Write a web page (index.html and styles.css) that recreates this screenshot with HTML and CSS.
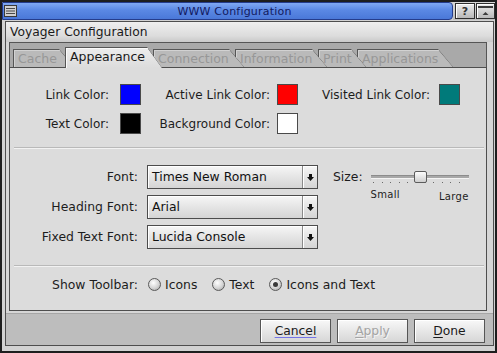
FILE: index.html
```html
<!DOCTYPE html>
<html lang="en">
<head>
  <meta charset="UTF-8">
  <title>WWW Configuration</title>
  <link rel="stylesheet" href="styles.css">
</head>
<body>
  <div class="window">
    <div class="titlebar">
      <div class="title-main">
        <span class="menu-icon">
          <svg width="13" height="12" viewBox="0 0 13 12">
            <rect x="0.5" y="0.5" width="12" height="11" fill="#d0d0d0" stroke="#3a3a3a"/>
            <path d="M2 3.5h9M2 6h9M2 8.5h9" stroke="#4a4a4a" stroke-width="1"/>
          </svg>
        </span>
        <span class="title">WWW Configuration</span>
      </div>
      <div class="title-buttons">
        <span class="tbtn help">?</span>
        <span class="tbtn shade">
          <svg width="17" height="14" viewBox="0 0 17 14">
            <rect x="1" y="2" width="15" height="2" fill="#3c3c3c"/>
            <polygon points="5.5,11 11.5,11 8.5,8" fill="#3c3c3c"/>
          </svg>
        </span>
      </div>
    </div>

    <div class="frame">
      <div class="header">Voyager Configuration</div>

      <div class="notebook">
        <div class="tabs">
          <div class="tab"><div class="tab-face">Cache</div></div>
          <div class="tab active"><div class="tab-face">Appearance</div></div>
          <div class="tab"><div class="tab-face">Connection</div></div>
          <div class="tab"><div class="tab-face">Information</div></div>
          <div class="tab"><div class="tab-face">Print</div></div>
          <div class="tab"><div class="tab-face">Applications</div></div>
        </div>

        <div class="panel">
          <div class="colors">
            <span class="label pad-a">Link Color:</span>
            <span class="swatch blue"></span>
            <span class="label pad-b">Active Link Color:</span>
            <span class="swatch red"></span>
            <span class="label pad-c">Visited Link Color:</span>
            <span class="swatch teal"></span>

            <span class="label pad-a">Text Color:</span>
            <span class="swatch black"></span>
            <span class="label pad-b">Background Color:</span>
            <span class="swatch white"></span>
          </div>

          <div class="sep"></div>

          <div class="fonts">
            <span class="label">Font:</span>
            <div class="select">
              <span class="select-text">Times New Roman</span>
              <span class="select-arrow"><svg width="7" height="7" viewBox="0 0 7 7"><rect x="2" y="0" width="3" height="3" fill="#111"/><polygon points="0,3 7,3 3.5,7" fill="#111"/></svg></span>
            </div>
            <div class="size-box">
              <span class="size-label">Size:</span>
              <div class="slider">
                <div class="slider-row">
                  <div class="track"></div>
                  <div class="thumb"></div>
                </div>
                <div class="ticks"></div>
                <div class="slider-labels">
                  <span>Small</span>
                  <span class="large">Large</span>
                </div>
              </div>
            </div>

            <span class="label">Heading Font:</span>
            <div class="select">
              <span class="select-text">Arial</span>
              <span class="select-arrow"><svg width="7" height="7" viewBox="0 0 7 7"><rect x="2" y="0" width="3" height="3" fill="#111"/><polygon points="0,3 7,3 3.5,7" fill="#111"/></svg></span>
            </div>

            <span class="label">Fixed Text Font:</span>
            <div class="select">
              <span class="select-text">Lucida Console</span>
              <span class="select-arrow"><svg width="7" height="7" viewBox="0 0 7 7"><rect x="2" y="0" width="3" height="3" fill="#111"/><polygon points="0,3 7,3 3.5,7" fill="#111"/></svg></span>
            </div>
          </div>

          <div class="sep sep-low"></div>

          <div class="toolbar-row">
            <span class="label">Show Toolbar:</span>
            <div class="options">
              <span class="option"><span class="radio"></span>Icons</span>
              <span class="option"><span class="radio"></span>Text</span>
              <span class="option"><span class="radio checked"></span>Icons and Text</span>
            </div>
          </div>
        </div>
      </div>

      <div class="actions">
        <button class="btn"><span class="focus">Cancel</span></button>
        <button class="btn disabled"><u>A</u>pply</button>
        <button class="btn"><u>D</u>one</button>
      </div>
    </div>
  </div>
</body>
</html>
```

FILE: styles.css
```css
/* Voyager config dialog */
body {
  margin: 0;
  background: #000;
  font-family: "DejaVu Sans", sans-serif;
  font-size: 12px;
  color: #1c1c1c;
}

.window {
  width: 497px;
  height: 353px;
  box-sizing: border-box;
  border: 2px solid #1e1e1e;
  background: #d2d2d2;
  display: flex;
  flex-direction: column;
}

/* title bar */
.titlebar {
  height: 18px;
  display: flex;
  flex-shrink: 0;
}

.title-main {
  flex: 1;
  display: flex;
  align-items: center;
  box-sizing: border-box;
  border: 1px solid #243c8c;
  border-radius: 0 4px 4px 0;
  background: linear-gradient(#80a8f2, #5a88e4 45%, #4a78d8);
}

.menu-icon {
  display: flex;
  margin-left: 1px;
}

.title {
  flex: 1;
  text-align: center;
  font-size: 11px;
  letter-spacing: 0.2px;
  color: #121a60;
}

.title-buttons {
  width: 42px;
  box-sizing: border-box;
  padding-left: 2px;
  display: flex;
  gap: 1px;
  align-items: center;
  background: linear-gradient(#d8d8d8, #bdbdbd);
}

.tbtn {
  width: 20px;
  height: 16px;
  box-sizing: border-box;
  border: 1px solid #2e2e2e;
  background: linear-gradient(#ededed, #b8b8b8);
  box-shadow: inset 1px 1px 0 #fff;
  display: flex;
  align-items: center;
  justify-content: center;
}

.tbtn.help {
  font-size: 11px;
  font-weight: bold;
  color: #333;
}

.tbtn.shade {
  width: 19px;
}

/* frame */
.frame {
  flex: 1;
  margin: 1px 1px 5px 3px;
  border: 1px solid #4e4e4e;
  background: #d6d6d6;
  display: flex;
  flex-direction: column;
}

.header {
  height: 20px;
  line-height: 20px;
  padding-left: 4px;
  font-size: 12.3px;
  color: #1a1a1a;
  background: linear-gradient(#efefef, #dcdcdc 70%, #c9c9c9);
}

.notebook {
  margin: 0 6px 0 3px;
}

/* tabs */
.tabs {
  height: 25px;
  box-sizing: border-box;
  border: 1px solid #555;
  border-bottom: 0;
  background: #a9a9a9;
  display: flex;
  align-items: flex-end;
  padding-left: 3px;
  font-size: 12.5px;
}

.tab {
  position: relative;
  flex-shrink: 0;
  height: 18px;
  box-sizing: border-box;
  margin-left: -9px;
  padding: 1px 0 0 1px;
  background: #555;
  clip-path: polygon(0 0, calc(100% - 15px) 0, 100% 100%, 0 100%);
}

.tab-face {
  height: 100%;
  padding-left: 4px;
  line-height: 17px;
  color: #979797;
  background: #bababa;
  box-shadow: inset 1px 1px 0 #d2d2d2;
  clip-path: polygon(0 0, calc(100% - 14.5px) 0, 100% 100%, 0 100%);
}

.tab.active {
  height: 21px;
  margin-bottom: -1px;
}

.tab.active .tab-face {
  line-height: 18px;
  color: #1a1a1a;
  background: linear-gradient(#ededed, #dcdcdc);
  box-shadow: inset 1px 1px 0 #fafafa;
}

.tab:nth-child(1) { margin-left: 0; width: 61px; z-index: 6; }
.tab:nth-child(2) { width: 97px; z-index: 10; }
.tab:nth-child(3) { width: 91px; z-index: 5; }
.tab:nth-child(4) { width: 92px; z-index: 4; }
.tab:nth-child(5) { width: 48px; z-index: 3; }
.tab:nth-child(6) { width: 96px; z-index: 2; }

/* panel */
.panel {
  height: 244px;
  box-sizing: border-box;
  border: 1px solid #4e4e4e;
  background: #dcdcdc;
  padding-top: 16px;
}

.label {
  text-align: right;
}

.colors {
  display: grid;
  grid-template-columns: 110px 21px 136px 21px 141px 21px;
  grid-auto-rows: 21px;
  row-gap: 8px;
  align-items: center;
}

.pad-a { padding-right: 11px; }
.pad-b { padding-right: 7px; }
.pad-c { padding-right: 9px; }

.swatch {
  width: 21px;
  height: 21px;
  box-sizing: border-box;
  border: 1px solid #4a4a4a;
}

.blue { background: #0000ff; }
.red { background: #ff0000; }
.teal { background: #007a7a; }
.black { background: #000; }
.white { background: #fff; }

.sep {
  margin: 13px 2px 0 4px;
  border-top: 1px solid #b9b9b9;
  border-bottom: 1px solid #f2f2f2;
}

.sep-low {
  margin-top: 16px;
}

/* fonts */
.fonts {
  display: grid;
  grid-template-columns: 128px 171px 1fr;
  grid-auto-rows: 24px;
  column-gap: 9px;
  row-gap: 6px;
  margin-top: 16px;
  font-size: 12.4px;
}

.fonts .label {
  line-height: 24px;
}

.select {
  display: flex;
  box-sizing: border-box;
  border: 1px solid #4c4c4c;
  background: linear-gradient(#f6f6f6, #d4d4d4);
  box-shadow: inset 1px 1px 0 #fff;
}

.select-text {
  flex: 1;
  padding-left: 4px;
  line-height: 22px;
  color: #111;
}

.select-arrow {
  width: 15px;
  box-sizing: border-box;
  border-left: 1px solid #8a8a8a;
  box-shadow: inset 1px 0 0 #fff;
  display: flex;
  align-items: center;
  justify-content: center;
}

.size-box {
  grid-column: 3;
  grid-row: 1 / span 3;
  display: flex;
  align-items: flex-start;
  margin-left: 6px;
}

.size-label {
  line-height: 24px;
}

.slider {
  width: 98px;
  margin-left: 8px;
  padding-top: 6px;
}

.slider-row {
  position: relative;
  height: 12px;
  display: flex;
  align-items: center;
}

.track {
  width: 100%;
  height: 4px;
  box-sizing: border-box;
  border-top: 1px solid #8c8c8c;
  border-bottom: 1px solid #f4f4f4;
  background: #a8a8a8;
}

.thumb {
  position: absolute;
  left: 43px;
  top: 0;
  width: 13px;
  height: 12px;
  box-sizing: border-box;
  border: 1px solid #5c5c5c;
  border-radius: 2px;
  background: linear-gradient(#fdfdfd, #cfcfcf);
}

.ticks {
  height: 1px;
  margin: -1px 1px 0 2px;
  background: repeating-linear-gradient(to right, #6a6a6a 0 1px, transparent 1px 8.6px);
}

.slider-labels {
  display: flex;
  justify-content: space-between;
  margin-top: 6px;
  font-size: 10px;
  letter-spacing: 0.3px;
}

.slider-labels .large {
  margin-top: 2px;
}

/* toolbar radios */
.toolbar-row {
  display: flex;
  align-items: center;
  height: 18px;
  margin-top: 8px;
  font-size: 12.4px;
}

.toolbar-row .label {
  width: 128px;
  margin-right: 10px;
}

.options {
  display: flex;
  gap: 15px;
}

.option {
  display: flex;
  align-items: center;
  gap: 4px;
}

.radio {
  width: 13px;
  height: 13px;
  box-sizing: border-box;
  border: 1px solid #5a5a5a;
  border-radius: 50%;
  background: radial-gradient(circle at 40% 35%, #fff, #d4d4d4 55%, #9e9e9e);
  display: flex;
  align-items: center;
  justify-content: center;
}

.radio.checked::after {
  content: "";
  width: 5px;
  height: 5px;
  border-radius: 50%;
  background: #3a3a3a;
}

/* bottom buttons */
.actions {
  margin-top: 2px;
  height: 32px;
  box-sizing: border-box;
  border-top: 1px solid #a6a6a6;
  background: #bdbdbd;
  display: flex;
  justify-content: flex-end;
  align-items: flex-start;
  gap: 6px;
  padding: 5px 8px 0 0;
}

.btn {
  width: 71px;
  height: 24px;
  box-sizing: border-box;
  padding: 0;
  border: 1px solid #555;
  background: linear-gradient(#f8f8f8, #d6d6d6);
  box-shadow: inset 1px 1px 0 #fff;
  font-family: "DejaVu Sans", sans-serif;
  font-size: 12.3px;
  color: #1a1a1a;
}

.btn .focus {
  text-decoration: underline;
  text-decoration-color: #7474e6;
  text-underline-offset: 2px;
}

.btn u {
  text-underline-offset: 2px;
}

.btn.disabled {
  color: #a4a4a4;
  text-shadow: 1px 1px 0 #f4f4f4;
}
```
